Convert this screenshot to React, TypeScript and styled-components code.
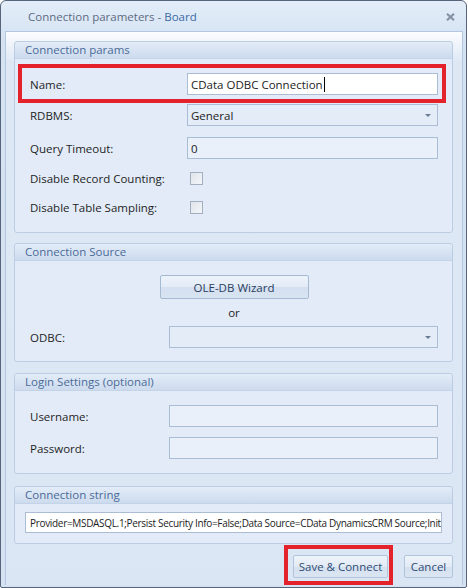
import * as React from 'react';
import styled, { createGlobalStyle } from 'styled-components';

const GlobalStyle = createGlobalStyle`
  html, body {
    margin: 0;
    padding: 0;
    background: #ffffff;
  }
  body {
    font-family: "Open Sans", "Noto Sans", "DejaVu Sans", sans-serif;
    font-size: 11.5px;
    color: #1e1e1e;
  }
`;

const Window = styled.div`
  width: 467px;
  height: 588px;
  box-sizing: border-box;
  border: 1px solid #56657a;
  border-radius: 6px 6px 2px 2px;
  background: linear-gradient(#e3edf9, #d4e2f2 40px, #d4e2f2);
  display: flex;
  flex-direction: column;
  overflow: hidden;
`;

const TitleBar = styled.div`
  flex-shrink: 0;
  height: 30px;
  display: flex;
  align-items: center;
  justify-content: space-between;
  padding: 1px 11px 0 27px;
  box-sizing: border-box;
  font-size: 11.5px;
  color: #5c6b82;
`;

const TitleAccent = styled.span`
  color: #3b6aa6;
`;

const CloseIcon = styled.svg`
  width: 9px;
  height: 8px;
`;

const Body = styled.div`
  flex: 1;
  min-height: 0;
  margin: 0 3px 2px 4px;
  border: 1px solid #b3c7e0;
  border-bottom: none;
  background: linear-gradient(#fbfdff, #dee8f5 30px, #dbe6f4);
  padding: 9px 9px 0 8px;
  display: flex;
  flex-direction: column;
`;

const Group = styled.section<{ $mt?: number }>`
  flex-shrink: 0;
  margin-top: ${(p) => p.$mt ?? 0}px;
  border: 1px solid #bccde3;
  border-radius: 3px;
  background: #e2ebf7;
`;

const GroupHeader = styled.div`
  height: 16px;
  line-height: 16px;
  padding-left: 10px;
  font-size: 11.5px;
  color: #4a6b98;
  background: linear-gradient(#e3ecf8, #cddbee);
  border-bottom: 1px solid #c3d3e8;
  border-radius: 3px 3px 0 0;
`;

const GroupBody = styled.div<{ $pt: number; $pb: number; $px?: number }>`
  padding: ${(p) => p.$pt}px ${(p) => p.$px ?? 14}px ${(p) => p.$pb}px
    ${(p) => p.$px ?? 15}px;
  display: flex;
  flex-direction: column;
`;

const Row = styled.div<{ $label: number; $mt?: number; $h?: number }>`
  display: grid;
  grid-template-columns: ${(p) => p.$label}px 1fr;
  align-items: center;
  margin-top: ${(p) => p.$mt ?? 0}px;
  height: ${(p) => p.$h ?? 22}px;
`;

const Highlight = styled.div`
  border: 4px solid #e3222b;
  margin: 5px -8px 0 -12px;
  padding: 5px 4px 4px 8px;
`;

const Label = styled.span`
  color: #1f1f1f;
`;

const Input = styled.div<{ $white?: boolean }>`
  height: 22px;
  box-sizing: border-box;
  border: 1px solid #abbdd5;
  background: ${(p) => (p.$white ? '#ffffff' : '#e9f0fa')};
  padding: 0 3px;
  display: flex;
  align-items: center;
  white-space: nowrap;
  overflow: hidden;
  color: #1c1c1c;
`;

const ConnString = styled(Input)`
  height: 21px;
  font-size: 10px;
  letter-spacing: -0.32px;
  padding: 0 4px;
`;

const Caret = styled.span`
  display: inline-block;
  width: 1px;
  height: 15px;
  background: #000;
  margin-left: 1px;
`;

const Select = styled(Input)`
  justify-content: space-between;
  background: #e4ecf7;
`;

const Arrow = styled.span`
  width: 0;
  height: 0;
  margin-right: 3px;
  border-left: 3px solid transparent;
  border-right: 3px solid transparent;
  border-top: 3px solid #6b7b92;
`;

const CheckBox = styled.span`
  width: 11px;
  height: 11px;
  margin-left: 3px;
  border: 1px solid #a2afc0;
  background: linear-gradient(135deg, #dfe4ea, #f4f6f9);
`;

const WizardButton = styled.div`
  align-self: center;
  width: 149px;
  height: 24px;
  box-sizing: border-box;
  border: 1px solid #a6bad4;
  border-radius: 2px;
  background: linear-gradient(#edf3fb 0%, #e3ebf6 50%, #d4e0f0 52%, #d9e4f2 100%);
  display: flex;
  align-items: center;
  justify-content: center;
  font-size: 11.5px;
  color: #283c5c;
`;

const OrText = styled.div`
  text-align: center;
  height: 27px;
  line-height: 27px;
  font-size: 11.5px;
`;

const Footer = styled.div`
  display: flex;
  justify-content: flex-end;
  gap: 16px;
  margin-top: 11px;
`;

const RedFrame = styled.div`
  border: 4px solid #e3222b;
  padding: 6px 1px 3px 5px;
  margin: -10px -5px -7px 0;
  display: flex;
`;

const Button = styled.div<{ $w: number }>`
  width: ${(p) => p.$w}px;
  height: 23px;
  box-sizing: border-box;
  border: 1px solid #b2c4dc;
  border-radius: 2px;
  background: linear-gradient(#eef4fb 0%, #e2eaf5 50%, #d5e1f0 52%, #dbe5f2 100%);
  display: flex;
  align-items: center;
  justify-content: center;
  font-size: 11.5px;
  color: #2f4a72;
`;

export default function App() {
  return (
    <>
      <GlobalStyle />
      <Window>
        <TitleBar>
          <span>
            Connection parameters - <TitleAccent>Board</TitleAccent>
          </span>
          <CloseIcon viewBox="0 0 9 8">
            <path d="M1 0.8 L8 7.2 M8 0.8 L1 7.2" stroke="#8592a4" strokeWidth="2.2" />
          </CloseIcon>
        </TitleBar>
        <Body>
          <Group>
            <GroupHeader>Connection params</GroupHeader>
            <GroupBody $pt={0} $pb={10}>
              <Highlight>
                <Row $label={157}>
                  <Label>Name:</Label>
                  <Input $white>
                    CData ODBC Connection
                    <Caret />
                  </Input>
                </Row>
              </Highlight>
              <Row $label={157} $mt={1}>
                <Label>RDBMS:</Label>
                <Select>
                  General
                  <Arrow />
                </Select>
              </Row>
              <Row $label={157} $mt={11}>
                <Label>Query Timeout:</Label>
                <Input>0</Input>
              </Row>
              <Row $label={157} $mt={5} $h={29}>
                <Label>Disable Record Counting:</Label>
                <CheckBox />
              </Row>
              <Row $label={157} $h={29}>
                <Label>Disable Table Sampling:</Label>
                <CheckBox />
              </Row>
            </GroupBody>
          </Group>

          <Group $mt={10}>
            <GroupHeader>Connection Source</GroupHeader>
            <GroupBody $pt={14} $pb={14}>
              <WizardButton>OLE-DB Wizard</WizardButton>
              <OrText>or</OrText>
              <Row $label={139} $h={21}>
                <Label>ODBC:</Label>
                <Select>
                  <span />
                  <Arrow />
                </Select>
              </Row>
            </GroupBody>
          </Group>

          <Group $mt={11}>
            <GroupHeader>Login Settings (optional)</GroupHeader>
            <GroupBody $pt={14} $pb={15}>
              <Row $label={139} $h={21}>
                <Label>Username:</Label>
                <Input />
              </Row>
              <Row $label={139} $mt={11} $h={21}>
                <Label>Password:</Label>
                <Input />
              </Row>
            </GroupBody>
          </Group>

          <Group $mt={12}>
            <GroupHeader>Connection string</GroupHeader>
            <GroupBody $pt={8} $pb={10} $px={10}>
              <ConnString $white>
                Provider=MSDASQL.1;Persist Security Info=False;Data Source=CData DynamicsCRM Source;Initial Catalog=CData
              </ConnString>
            </GroupBody>
          </Group>

          <Footer>
            <RedFrame>
              <Button $w={95}>Save &amp; Connect</Button>
            </RedFrame>
            <Button $w={49}>Cancel</Button>
          </Footer>
        </Body>
      </Window>
    </>
  );
}
